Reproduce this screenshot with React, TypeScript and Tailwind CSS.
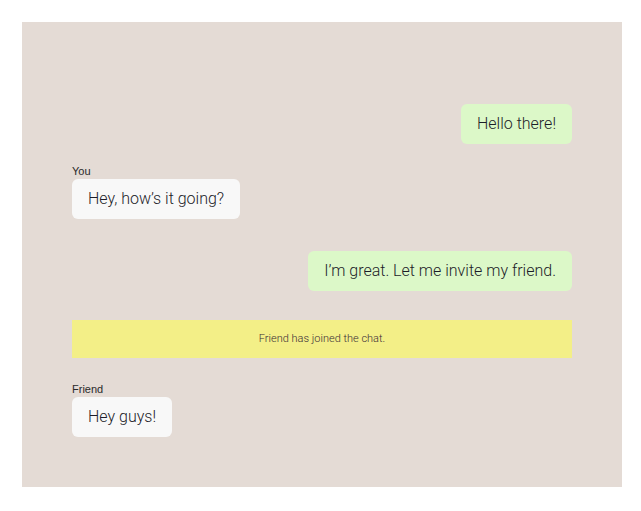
import React from "react";

type Msg =
  | { kind: "out"; text: string }
  | { kind: "in"; from: string; text: string }
  | { kind: "notice"; text: string };

const messages: Msg[] = [
  { kind: "out", text: "Hello there!" },
  { kind: "in", from: "You", text: "Hey, how’s it going?" },
  { kind: "out", text: "I’m great. Let me invite my friend." },
  { kind: "notice", text: "Friend has joined the chat." },
  { kind: "in", from: "Friend", text: "Hey guys!" },
];

const margins = ["mt-0", "mt-[19px]", "mt-[32px]", "mt-[29px]", "mt-[23px]"];

export default function App() {
  return (
    <div className="min-h-screen bg-white pt-[22px] pl-[22px] font-['Roboto',sans-serif]">
      <div className="w-[600px] bg-[#e4dbd5] px-[50px] pt-[82px] pb-[50px]">
        {messages.map((m, i) => {
          if (m.kind === "out") {
            return (
              <div key={i} className={`${margins[i]} flex justify-end`}>
                <div className="rounded-[6px] bg-[#dcf8c8] px-[16px] py-[9px] text-[16px] leading-[22px] font-light text-[#1c1c28]">
                  {m.text}
                </div>
              </div>
            );
          }
          if (m.kind === "in") {
            return (
              <div key={i} className={`${margins[i]} flex flex-col items-start`}>
                <div className="font-['Liberation_Sans',sans-serif] text-[11px] leading-[16px] text-[#2a2a2a]">
                  {m.from}
                </div>
                <div className="rounded-[6px] bg-[#f8f8f8] px-[16px] py-[9px] text-[16px] leading-[22px] font-light text-[#1c1c28]">
                  {m.text}
                </div>
              </div>
            );
          }
          return (
            <div
              key={i}
              className={`${margins[i]} flex h-[38px] items-center justify-center bg-[#f3ef87] text-[11px] font-light text-[#3a2c36]`}
            >
              {m.text}
            </div>
          );
        })}
      </div>
    </div>
  );
}
